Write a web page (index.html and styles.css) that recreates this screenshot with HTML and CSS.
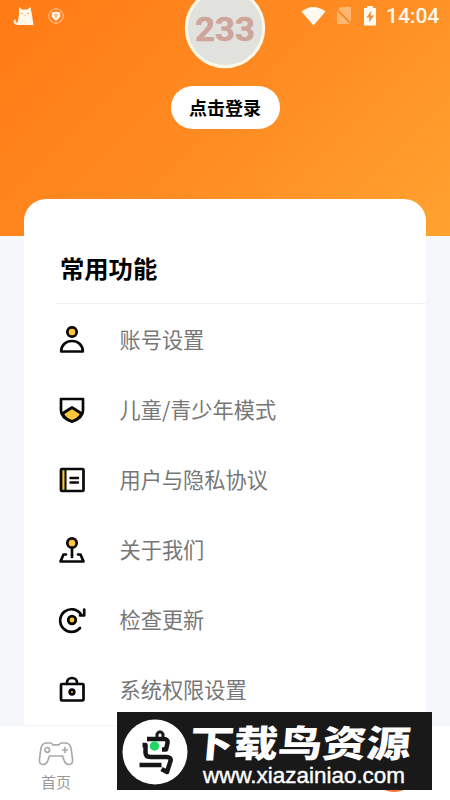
FILE: index.html
```html
<!DOCTYPE html>
<html lang="zh-CN">
<head>
<meta charset="utf-8">
<title>常用功能</title>
<link rel="stylesheet" href="styles.css">
</head>
<body>
<div class="screen">
  <header class="hero">
    <svg class="avatar" viewBox="0 0 82 82">
      <circle cx="41" cy="41" r="38.7" fill="#e1e2de" stroke="#fff8e8" stroke-width="3"/>
      <text class="avatar-text" x="11" y="53.500" textLength="60" lengthAdjust="spacingAndGlyphs">233</text>
    </svg>
    <button class="login">点击登录</button>
  </header>

  <div class="status">
    <svg class="cat" viewBox="0 0 22 20"><path d="M6 1l3 2.500h5L17.500 1l1.500 8 1.500 10H5l-2.500-.5C-.5 17 .5 13 2.500 13.500c1 1-.5 2 .5 3h1.500L6 9z" fill="#fff8e8"/><path d="M8 7.500h2M14 7.500h2M11.500 9.500h1" stroke="#e5b985"/></svg>
    <svg class="guard" viewBox="0 0 16 16"><circle cx="8" cy="8" r="7.200" fill="none" stroke="#ffd5ae" stroke-width=".9"/><path d="M3.800 4.600L8 3.500l4.200 1.100v4Q11 11.500 8 12.700 5 11.500 3.800 8.600z" fill="#fff8e8"/><circle cx="8" cy="7" r="1.300" fill="none" stroke="#ff9b48" stroke-width=".8"/><path d="M8 8.500v1.500" stroke="#ff9b48" stroke-width=".8"/></svg>
    <span class="spacer"></span>
    <svg class="wifi" viewBox="0 0 25 20"><path d="M.5 5.500Q12.500-3.500 24.500 5.500L12.500 19.500z" fill="#fffaf0"/></svg>
    <svg class="sim" viewBox="0 0 18 20"><path d="M6 1h10v15L3 3.500zM2 5l13 13H2z" fill="#ffb66f"/><path d="M.5 2l16.500 16.500" stroke="#e58a3c"/></svg>
    <svg class="battery" viewBox="0 0 14 20"><path d="M4 0h6v2h3v17.500H1V2h3z" fill="#fffaf0"/><path d="M8.500 4.500L3.500 11.500h3L6 16.500l5-7H7.500z" fill="#f28c34"/></svg>
    <span class="time">14:04</span>
  </div>

  <main class="card">
    <h1 class="title">常用功能</h1>
    <ul class="menu">
      <li class="item"><svg class="icon" viewBox="0 0 28 28"><circle cx="14" cy="6" r="4.700" fill="#fdc63a"/><path d="M3.200 25.500c0-6.500 5-10.500 10.800-10.500s10.800 4 10.800 10.500z"/></svg><span class="label">账号设置</span></li>
      <li class="item"><svg class="icon" viewBox="0 0 28 28"><path d="M4.500 17.500L14 11.500l9.500 6Q20.500 23.500 14 25.500 7.500 23.500 4.500 17.500z" fill="#fdc63a"/><path d="M3 3h22v11.500Q25 22 14 25.500 3 22 3 14.500z"/></svg><span class="label">儿童/青少年模式</span></li>
      <li class="item"><svg class="icon" viewBox="0 0 28 28"><path d="M3.500 3.500h4v21h-4z" fill="#fdc63a" stroke="none"/><rect x="3" y="3" width="22.500" height="22" rx="1"/><path d="M7.500 3v22" stroke-width="2"/><path d="M12.500 12h7.500M12.500 16.500h7.500" stroke-width="2.400"/></svg><span class="label">用户与隐私协议</span></li>
      <li class="item"><svg class="icon" viewBox="0 0 28 28"><circle cx="14" cy="7" r="4.700" fill="#fdc63a"/><path d="M14 12v9M8 18.500H5.500L2.500 25.500h23L22.500 18.500H20"/></svg><span class="label">关于我们</span></li>
      <li class="item"><svg class="icon" viewBox="0 0 28 28"><circle cx="14" cy="14" r="3.800" fill="#fdc63a"/><path d="M22 22A11.300 11.300 0 1 1 23 8.500M26.200 3.500V9.500H22"/></svg><span class="label">检查更新</span></li>
      <li class="item"><svg class="icon" viewBox="0 0 28 28"><path d="M9 8V6.500a5 4.500 0 0 1 10 0V8"/><rect x="3" y="8" width="22.500" height="16.500" rx="1"/><circle cx="14" cy="16" r="2.300" fill="#fdc63a"/></svg><span class="label">系统权限设置</span></li>
    </ul>
  </main>

  <nav class="tabs">
    <a class="tab">
      <svg class="pad" viewBox="0 0 36 26"><path d="M9 2h3q2 0 3 1.800h6Q22 2 24 2h3q5 0 6 5l1.500 11q.5 5.500-3.500 5.500-3 0-4.500-3L24.500 15h-13l-2 5.500q-1.500 3-4.500 3-4 0-3.500-5.500L3 7q1-5 6-5z"/><circle cx="9.300" cy="9" r="2.300"/><path d="M27 6v6M24 9h6"/></svg>
      <span>首页</span>
    </a>
    <span class="bubble"></span>
  </nav>

  <div class="watermark">
    <svg class="bird" viewBox="0 0 66 66"><circle cx="33" cy="33" r="32.500" fill="#fff"/><g fill="none" stroke="#161616" stroke-width="4.500" stroke-linejoin="round"><path d="M25 20h17q4 0 3.500 4l-1.500 6.500h-4"/><path d="M20.500 26h3v7.500q0 4.500 5 4.500h16q5 0 4 4l-3.500 11-5.500-3"/><path d="M17.500 46h22"/><path d="M35 19v-4q3-4.500 6 0v4" stroke-width="3"/></g><circle cx="32.500" cy="27" r="4.700" fill="#20d765"/></svg>
    <div class="brand">
      <svg class="brand-name" viewBox="0 0 228 44"><text class="brand-text" x="4" y="38" textLength="221" lengthAdjust="spacingAndGlyphs" transform="skewX(-5)">下载鸟资源</text></svg>
      <svg class="brand-url" viewBox="0 0 204 28"><text class="url-text" x="1" y="20" textLength="202" lengthAdjust="spacingAndGlyphs">www.xiazainiao.com</text></svg>
    </div>
  </div>
</div>
</body>
</html>
```

FILE: styles.css
```css
* { box-sizing: border-box; }
body {
  margin: 0;
  font-family: "Noto Sans CJK SC", sans-serif;
}
.screen {
  position: relative;
  display: flex;
  flex-direction: column;
  width: 450px;
  height: 800px;
  overflow: hidden;
  background: #f5f7fa;
}
svg { display: block; flex: none; }
.hero {
  display: flex;
  flex: none;
  flex-direction: column;
  align-items: center;
  height: 236px;
  background: linear-gradient(135deg, #ff7a15 0%, #ff8b22 50%, #ffa230 100%);
}
.avatar {
  width: 82px;
  height: 82px;
  margin-top: -13px;
}
.avatar-text {
  font: 700 34px "Roboto", sans-serif;
  fill: #cfa49b;
  stroke: #cfa49b;
  stroke-width: .5;
}
.login {
  width: 109px;
  height: 43px;
  margin-top: 17px;
  padding: 0 0 2px;
  border: 0;
  border-radius: 22px;
  background: #fff;
  color: #000;
  font: 700 18px/40px "Noto Sans CJK SC", sans-serif;
}
.status {
  position: absolute;
  top: 0;
  left: 0;
  display: flex;
  align-items: center;
  width: 450px;
  height: 32px;
  padding: 0 11px 0 13px;
}
.cat { width: 22px; height: 20px; }
.guard { width: 16px; height: 16px; margin-left: 13px; }
.spacer { flex: 1; }
.wifi { width: 25px; height: 20px; margin-right: 9px; }
.sim { width: 18px; height: 20px; margin-right: 10px; }
.battery { width: 14px; height: 20px; margin-right: 9px; }
.time {
  width: 53px;
  color: #fffaf0;
  font: 500 21px/32px "Roboto", sans-serif;
  white-space: nowrap;
}
.card {
  flex: 1;
  min-height: 0;
  margin: -37px 24px 0;
  overflow: hidden;
  border-radius: 22px 22px 0 0;
  background: #fff;
}
.title {
  height: 105px;
  margin: 0 0 0 32px;
  padding: 51px 0 0 4px;
  border-bottom: 1px solid #f1f2f3;
  color: #000;
  font-size: 24.3px;
  font-weight: 700;
  line-height: 35px;
}
.menu {
  margin: 0;
  padding: 1px 0 0 34px;
  list-style: none;
}
.item {
  display: flex;
  align-items: center;
  height: 70px;
  gap: 33.5px;
  color: #777;
  font-size: 21.2px;
  line-height: 32px;
}
.label { padding-bottom: 3px; }
.icon {
  width: 28px;
  height: 28px;
  fill: none;
  stroke: #080808;
  stroke-width: 2.7;
  stroke-linejoin: round;
  stroke-linecap: round;
}
.tabs {
  display: flex;
  flex: none;
  justify-content: space-between;
  height: 75px;
  padding: 0 30px 0 38px;
  border-top: 1px solid #f2f3f5;
  background: #fff;
}
.tab {
  display: flex;
  flex-direction: column;
  align-items: center;
  padding-top: 15px;
  color: #999;
  font-size: 15px;
  line-height: 22px;
}
.pad {
  width: 36px;
  height: 26px;
  margin-bottom: 4px;
  fill: none;
  stroke: #aaa;
  stroke-width: 1.7;
}
.bubble {
  width: 52px;
  height: 52px;
  margin-top: 14px;
  border-radius: 50%;
  background: #f47836;
}
.watermark {
  position: absolute;
  top: 712px;
  left: 117px;
  display: flex;
  width: 315px;
  height: 78px;
  padding: 7px 0 0 5px;
  background: #191919;
}
.bird { width: 66px; height: 66px; }
.brand-name { width: 228px; height: 44px; overflow: visible; }
.brand-url { width: 204px; height: 28px; margin: 0 0 0 14px; overflow: visible; }
.brand-text {
  font: 900 37px "Noto Sans CJK SC", sans-serif;
  fill: #fff;
}
.url-text {
  font: 22px "Liberation Sans", sans-serif;
  fill: #fff;
  stroke: #fff;
  stroke-width: .4;
}
```
